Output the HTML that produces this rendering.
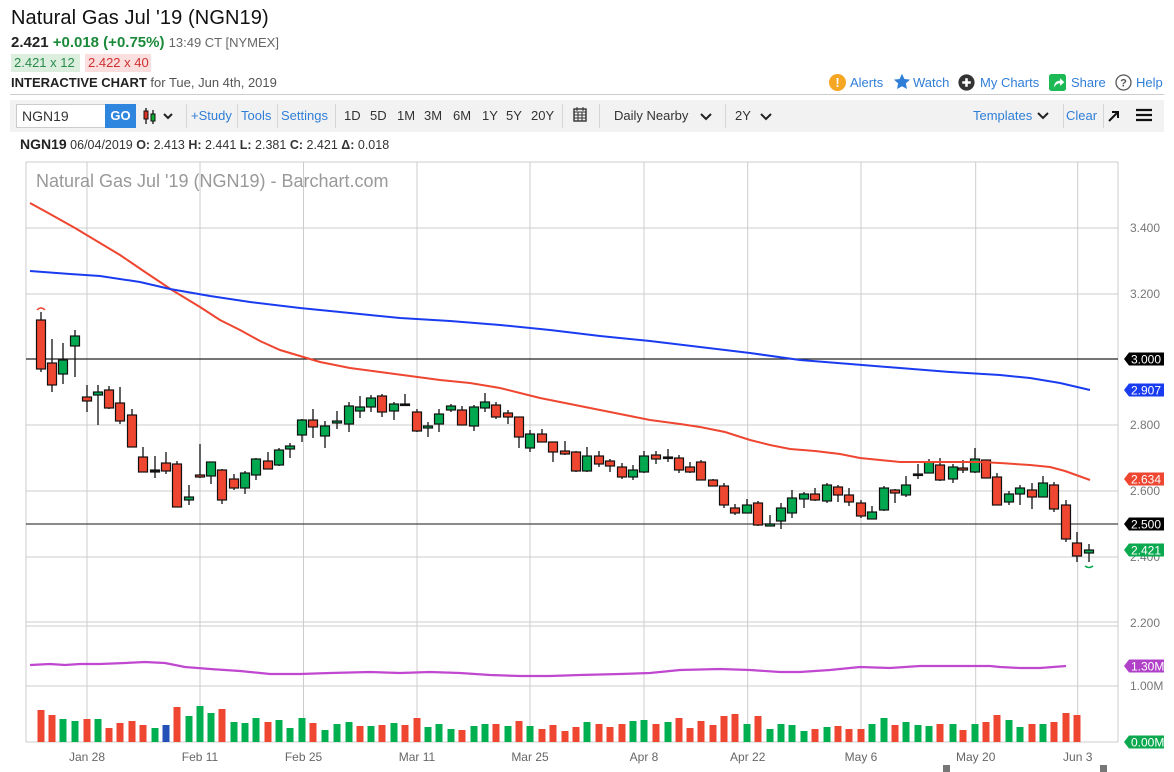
<!DOCTYPE html>
<html><head><meta charset="utf-8">
<style>
*{margin:0;padding:0;box-sizing:border-box}
body{width:1174px;height:772px;background:#fff;font-family:"Liberation Sans",sans-serif;position:relative;overflow:hidden;color:#222}
.a{position:absolute;white-space:nowrap}
.tb{font-size:13px;color:#333}
.bl{color:#2f7ed8}
.sep{position:absolute;width:1px;background:#d6d6d6;top:104px;height:24px}
</style></head><body>
<div class="a" style="left:11px;top:7px;font-size:20px;color:#111;letter-spacing:0.1px">Natural Gas Jul '19 (NGN19)</div>
<div class="a" style="left:11px;top:34px;font-size:15px"><b>2.421</b> <b style="color:#1a8a3a">+0.018 (+0.75%)</b> <span style="font-size:13px;color:#666">13:49 CT [NYMEX]</span></div>
<div class="a" style="left:11px;top:54px;width:69px;height:18px;background:#dcefdf;color:#2a8a4a;font-size:13px;line-height:18px;padding-left:3px">2.421 x 12</div>
<div class="a" style="left:85px;top:54px;width:66px;height:18px;background:#fbdfdf;color:#d03030;font-size:13px;line-height:18px;padding-left:3px">2.422 x 40</div>
<div class="a" style="left:11px;top:75px;font-size:13px;color:#555"><b style="color:#222">INTERACTIVE CHART</b> for Tue, Jun 4th, 2019</div>

<div class="a" style="left:829px;top:74px;width:17px;height:17px;border-radius:50%;background:#f5a623;color:#fff;font-size:13px;font-weight:bold;text-align:center;line-height:17px">!</div>
<div class="a bl" style="left:850px;top:75px;font-size:13px">Alerts</div>
<svg class="a" style="left:893px;top:73px" width="18" height="18" viewBox="0 0 24 24"><path d="M12 1l3.2 7 7.6.8-5.7 5.1 1.6 7.5L12 17.6 5.3 21.4l1.6-7.5L1.2 8.8 8.8 8z" fill="#2f7ed8"/></svg>
<div class="a bl" style="left:913px;top:75px;font-size:13px">Watch</div>
<svg class="a" style="left:958px;top:74px" width="17" height="17" viewBox="0 0 20 20"><circle cx="10" cy="10" r="9.5" fill="#333"/><path d="M10 5v10M5 10h10" stroke="#fff" stroke-width="3"/></svg>
<div class="a bl" style="left:980px;top:75px;font-size:13px">My Charts</div>
<svg class="a" style="left:1049px;top:74px" width="17" height="17" viewBox="0 0 20 20"><rect width="20" height="20" rx="3" fill="#1db954"/><path d="M6 16c0-6 3-8 7-8V5l5 4.5-5 4.5v-3c-3 0-5 1-7 5z" fill="#fff"/></svg>
<div class="a bl" style="left:1071px;top:75px;font-size:13px">Share</div>
<svg class="a" style="left:1115px;top:74px" width="17" height="17" viewBox="0 0 20 20"><circle cx="10" cy="10" r="8.8" fill="none" stroke="#555" stroke-width="1.5"/><text x="10" y="14.5" font-size="13" font-family="Liberation Sans" text-anchor="middle" fill="#555" font-weight="bold">?</text></svg>
<div class="a bl" style="left:1136px;top:75px;font-size:13px">Help</div>

<div class="a" style="left:10px;top:94px;width:1154px;height:1px;background:#ccc"></div>
<div class="a" style="left:10px;top:100px;width:1154px;height:32px;background:#f2f2f2"></div>
<div class="a" style="left:16px;top:104px;width:90px;height:24px;background:#fff;border:1px solid #ccc;font-size:14px;line-height:22px;padding-left:5px;color:#333">NGN19</div>
<div class="a" style="left:105px;top:104px;width:31px;height:24px;background:#2f86de;color:#fff;font-weight:bold;font-size:13px;text-align:center;line-height:24px">GO</div>
<svg class="a" style="left:143px;top:107px" width="32" height="18" viewBox="0 0 32 18"><path d="M3 1v16M10 3v14" stroke="#111" stroke-width="1.3"/><rect x="1" y="4" width="4" height="8" fill="#d32" stroke="#111"/><rect x="8" y="7" width="4" height="7" fill="#1a3" stroke="#111"/><path d="M21 7l4 4 4-4" stroke="#222" stroke-width="2" fill="none"/></svg>
<div class="sep" style="left:186px"></div>
<div class="a tb bl" style="left:191px;top:108px">+Study</div>
<div class="sep" style="left:237px"></div>
<div class="a tb bl" style="left:241px;top:108px">Tools</div>
<div class="sep" style="left:277px"></div>
<div class="a tb bl" style="left:281px;top:108px">Settings</div>
<div class="sep" style="left:335px"></div>
<div class="a tb" style="left:344px;top:108px">1D</div>
<div class="a tb" style="left:370px;top:108px">5D</div>
<div class="a tb" style="left:397px;top:108px">1M</div>
<div class="a tb" style="left:424px;top:108px">3M</div>
<div class="a tb" style="left:453px;top:108px">6M</div>
<div class="a tb" style="left:482px;top:108px">1Y</div>
<div class="a tb" style="left:506px;top:108px">5Y</div>
<div class="a tb" style="left:531px;top:108px">20Y</div>
<div class="sep" style="left:562px"></div>
<svg class="a" style="left:573px;top:106px" width="14" height="16" viewBox="0 0 14 16"><rect x="1" y="3" width="12" height="12" fill="none" stroke="#333" stroke-width="1.4"/><path d="M1 6h12M4 1v4M10 1v4M1 9h12M1 12h12M5 6v9M9 6v9" stroke="#333" stroke-width="1"/></svg>
<div class="sep" style="left:599px"></div>
<div class="a tb" style="left:614px;top:108px">Daily Nearby</div>
<svg class="a" style="left:700px;top:112px" width="12" height="9"><path d="M1 2l5 5 5-5" stroke="#222" stroke-width="2" fill="none"/></svg>
<div class="sep" style="left:725px"></div>
<div class="a tb" style="left:735px;top:108px">2Y</div>
<svg class="a" style="left:760px;top:112px" width="12" height="9"><path d="M1 2l5 5 5-5" stroke="#222" stroke-width="2" fill="none"/></svg>
<div class="a tb bl" style="left:973px;top:108px">Templates</div>
<svg class="a" style="left:1037px;top:111px" width="12" height="9"><path d="M1 2l5 5 5-5" stroke="#222" stroke-width="2" fill="none"/></svg>
<div class="sep" style="left:1063px"></div>
<div class="a tb bl" style="left:1066px;top:108px">Clear</div>
<div class="sep" style="left:1103px"></div>
<svg class="a" style="left:1107px;top:110px" width="13" height="13"><path d="M2 11L11 2M5 2h6v6" stroke="#111" stroke-width="2" fill="none"/></svg>
<svg class="a" style="left:1136px;top:108px" width="16" height="14"><path d="M0 2h16M0 7h16M0 12h16" stroke="#111" stroke-width="2.2"/></svg>

<div class="a" style="left:20px;top:136px;font-size:12.5px;color:#333"><b style="font-size:14px;color:#222">NGN19</b> 06/04/2019 <b>O:</b> 2.413 <b>H:</b> 2.441 <b>L:</b> 2.381 <b>C:</b> 2.421 <b>Δ:</b> 0.018</div>

<svg class="a" style="left:0;top:0" width="1174" height="772" id="ch">
<g id="grid"></g>
<text x="36" y="187" font-size="18" fill="#999" font-family="Liberation Sans">Natural Gas Jul '19 (NGN19) - Barchart.com</text>
<g id="cd"></g>
</svg>
<script>
var s='',g='';
var vx=[87,200,303.5,417,530,644,747.7,861,975.7,1077.7];
vx.forEach(function(x){g+='<line x1="'+x+'" y1="162" x2="'+x+'" y2="742" stroke="#ccc"/>';});
[228,294,425,491,557,686].forEach(function(y){g+='<line x1="26" y1="'+y+'" x2="1118" y2="'+y+'" stroke="#ccc"/>';});
g+='<rect x="26" y="162" width="1092" height="580" fill="none" stroke="#ccc"/>';
g+='<line x1="26" y1="622" x2="1118" y2="622" stroke="#ccc"/><line x1="26" y1="626" x2="1118" y2="626" stroke="#ccc"/>';
g+='<line x1="26" y1="359" x2="1118" y2="359" stroke="#222" stroke-width="1.3"/><line x1="26" y1="524" x2="1118" y2="524" stroke="#444" stroke-width="1.3"/>';
var labs=[["Jan 28",87],["Feb 11",200],["Feb 25",303.5],["Mar 11",417],["Mar 25",530],["Apr 8",644],["Apr 22",747.7],["May 6",861],["May 20",975.7],["Jun 3",1077.7]];
labs.forEach(function(l){g+='<text x="'+l[1]+'" y="761" font-size="12" fill="#666" text-anchor="middle" font-family="Liberation Sans">'+l[0]+'</text>';});
[["3.400",228],["3.200",294],["2.800",425],["2.600",491],["2.400",557],["2.200",623],["1.00M",686]].forEach(function(l){g+='<text x="1130" y="'+(l[1]+4)+'" font-size="12" fill="#777" font-family="Liberation Sans">'+l[0]+'</text>';});
document.getElementById('grid').innerHTML=g;
var C=[[41,312,372,320,369,'r'],[52,339,392,363,385,'r'],[63,343,384,360,374,'g'],[75,330,377,336,346,'g'],[87,385,412,397,401,'r'],[98,385,425,392,395,'g'],[109,386,409,390,408,'r'],[120,387,424,403,421,'r'],[132,409,447,415,447,'r'],[143,447,472,457,472,'r'],[155,456,478,470,472,'k'],[166,452,474,463,471,'r'],[177,461,507,464,507,'r'],[189,485,505,497,500,'g'],[200,444,478,475,477,'r'],[211,462,484,462,476,'g'],[222,469,504,470,500,'r'],[234,474,490,479,488,'r'],[245,471,494,473,488,'g'],[256,458,480,459,475,'g'],[268,452,469,461,469,'r'],[279,448,466,450,465,'g'],[290,443,458,446,449,'g'],[302,419,442,420,435,'g'],[313,409,438,420,427,'r'],[325,421,448,426,436,'g'],[337,411,429,421,423,'g'],[349,402,432,406,424,'g'],[360,396,418,407,411,'g'],[371,395,412,398,407,'g'],[382,394,417,396,412,'r'],[394,402,420,404,411,'g'],[405,394,406,404,405,'k'],[417,409,432,412,431,'r'],[428,422,437,426,428,'g'],[439,409,432,414,424,'g'],[451,404,412,406,410,'g'],[462,406,425,410,425,'r'],[474,405,431,407,426,'g'],[485,393,412,402,408,'g'],[496,402,419,405,417,'r'],[508,410,424,413,417,'r'],[519,417,448,417,437,'r'],[530,430,452,434,448,'g'],[542,429,442,434,442,'r'],[553,442,462,442,452,'r'],[565,441,455,451,454,'r'],[576,451,472,452,471,'r'],[587,447,472,456,471,'g'],[599,451,467,456,464,'r'],[610,459,472,461,466,'r'],[622,463,479,467,477,'r'],[633,465,480,470,477,'g'],[644,451,473,456,472,'g'],[656,451,464,455,459,'r'],[668,449,462,457,458,'k'],[679,455,473,458,470,'r'],[690,462,473,467,472,'r'],[701,460,480,462,480,'r'],[713,479,486,480,486,'r'],[724,483,508,486,505,'r'],[735,504,515,508,513,'r'],[747,499,513,505,513,'g'],[758,501,526,503,525,'r'],[770,515,526,524,526,'g'],[781,503,529,508,521,'g'],[792,490,518,498,513,'g'],[804,492,508,494,499,'g'],[815,488,501,494,500,'r'],[827,483,503,485,501,'g'],[838,485,502,487,495,'r'],[849,488,506,495,502,'r'],[861,500,518,503,516,'r'],[872,506,519,512,519,'g'],[884,486,511,488,510,'g'],[895,489,503,490,493,'r'],[906,476,497,485,495,'g'],[918,464,479,474,475,'k'],[929,459,473,462,473,'g'],[940,458,481,465,480,'r'],[953,464,483,467,479,'g'],[963,460,473,468,470,'r'],[975,448,473,459,472,'g'],[986,460,478,460,478,'r'],[997,473,505,477,505,'r'],[1009,491,505,494,502,'g'],[1020,485,505,488,494,'g'],[1032,483,509,490,497,'r'],[1043,476,497,483,497,'g'],[1054,482,512,485,509,'r'],[1066,500,542,505,539,'r'],[1077,532,562,543,556,'r'],[1089,544,562,550,553,'g']];
var col={r:'#ee4630',g:'#00a84f',k:'#111'};
C.forEach(function(c){s+='<line x1="'+c[0]+'" y1="'+c[1]+'" x2="'+c[0]+'" y2="'+c[2]+'" stroke="#111" stroke-width="1.3"/>';var h=Math.max(c[4]-c[3],1.5);s+='<rect x="'+(c[0]-4.5)+'" y="'+c[3]+'" width="9" height="'+h+'" fill="'+col[c[5]]+'" stroke="#111" stroke-width="1.2"/>';});
s+='<path d="M37 310q4-4 8 0" stroke="#ee4630" fill="none" stroke-width="1.5"/><path d="M1085 566q4 3 8 0" stroke="#00a84f" fill="none" stroke-width="1.5"/>';
s+='<polyline fill="none" stroke="#ee4630" stroke-width="2" points="30,203 50,214 75,228 100,243 120,255 145,272 172,290 200,307 220,320 240,330 260,341 280,350 300,356 320,362 350,368 380,372 410,376 440,380 470,383 500,388 520,393 540,398 570,404 600,410 625,415 650,420 680,424 700,427 725,432 750,440 770,445 790,449 815,451 840,454 860,458 880,460 900,462 930,462 960,462 980,462 1000,463 1030,465 1050,467 1065,471 1090,480"/>';
s+='<polyline fill="none" stroke="#1a3cf0" stroke-width="2" points="30,271 70,274 100,276 140,282 170,289 210,296 250,302 300,308 350,313 400,318 450,321 500,325 550,330 600,336 650,341 700,347 750,353 800,360 850,364 900,368 950,372 1000,375 1030,378 1060,383 1090,390"/>';
s+='<polyline fill="none" stroke="#c048d0" stroke-width="2.2" points="30,665 50,664 65,665 80,664 100,664 125,663 145,662 165,663 185,667 210,669 240,671 270,674 300,674 330,673 370,672 400,673 430,672 460,673 490,675 520,676 550,676 580,675 620,674 650,673 680,670 720,669 750,670 780,672 800,672 830,670 860,667 890,668 920,666 950,666 990,666 1000,667 1020,668 1040,668 1066,666"/>';
var VT=[[270,'r'],[285,'r'],[297,'g'],[303,'g'],[297,'r'],[297,'g'],[324,'r'],[309,'r'],[303,'r'],[315,'r'],[324,'g'],[315,'b'],[261,'r'],[288,'g'],[258,'g'],[279,'g'],[267,'r'],[306,'g'],[309,'g'],[294,'g'],[306,'r'],[300,'g'],[324,'g'],[294,'g'],[309,'r'],[330,'g'],[312,'g'],[306,'g'],[318,'r'],[318,'g'],[315,'r'],[309,'g'],[315,'r'],[294,'r'],[321,'g'],[312,'g'],[327,'g'],[330,'r'],[318,'g'],[312,'g'],[312,'r'],[318,'g'],[303,'r'],[318,'g'],[327,'r'],[315,'r'],[333,'r'],[321,'r'],[306,'g'],[312,'r'],
[321,'r'],[312,'r'],[303,'g'],[300,'g'],[312,'r'],[306,'g'],[294,'r'],[324,'r'],[303,'r'],[315,'r'],[288,'r'],[282,'r'],[312,'g'],[288,'r'],[327,'g'],[312,'g'],[315,'g'],[333,'g'],[327,'r'],[321,'g'],[318,'r'],[327,'r'],[327,'r'],[312,'g'],[294,'g'],[315,'r'],[306,'g'],[315,'g'],[318,'g'],[312,'r'],[312,'g'],[330,'r'],[312,'g'],[306,'r'],[285,'r'],[300,'g'],[321,'g'],[312,'r'],[312,'g'],[306,'r'],[279,'r'],[285,'r']];
var vc={r:'#ee4630',g:'#00b050',b:'#2450b8'};
VT.forEach(function(v,i){var x=C[i][0];var h=(366-v[0])/3;s+='<rect x="'+(x-3.5)+'" y="'+(742-h)+'" width="7" height="'+h+'" fill="'+vc[v[1]]+'"/>';});
function tag(y,t,c){s+='<path d="M1124 '+y+'l5-6.5h35v13h-35z" fill="'+c+'"/><text x="1131" y="'+(y+4.5)+'" font-size="12" fill="#fff" font-family="Liberation Sans">'+t+'</text>';}
tag(359,'3.000','#000');tag(390,'2.907','#1a3cf0');tag(479,'2.634','#ee4630');tag(524,'2.500','#000');tag(550,'2.421','#0aa84f');tag(666,'1.30M','#b040c8');tag(742,'0.00M','#0aa84f');
s+='<rect x="943" y="765" width="7" height="7" fill="#777"/><rect x="1100" y="765" width="7" height="7" fill="#777"/>';
document.getElementById('cd').innerHTML=s;
</script>
</body></html>
